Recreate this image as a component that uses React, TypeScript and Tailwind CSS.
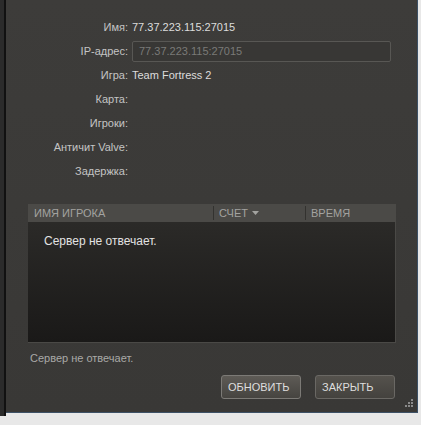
import React from 'react';

const rows = [
  { label: 'Имя:', value: '77.37.223.115:27015' },
  { label: 'IP-адрес:', input: '77.37.223.115:27015' },
  { label: 'Игра:', value: 'Team Fortress 2' },
  { label: 'Карта:' },
  { label: 'Игроки:' },
  { label: 'Античит Valve:' },
  { label: 'Задержка:' },
];

function Grip() {
  return (
    <svg width="10" height="10" viewBox="0 0 10 10" className="absolute right-[3px] bottom-[3px]">
      <rect x="7" y="0" width="2" height="2" fill="#8a8a8a" />
      <rect x="4" y="3" width="2" height="2" fill="#8a8a8a" />
      <rect x="7" y="3" width="2" height="2" fill="#8a8a8a" />
      <rect x="1" y="6" width="2" height="2" fill="#8a8a8a" />
      <rect x="4" y="6" width="2" height="2" fill="#8a8a8a" />
      <rect x="7" y="6" width="2" height="2" fill="#8a8a8a" />
    </svg>
  );
}

function App() {
  return (
    <div className="w-[421px] h-[425px] bg-[#e8e8e8] overflow-hidden antialiased" style={{ fontFamily: '"Liberation Sans", Arial, sans-serif' }}>
      <div className="flex h-[416px]">
        <div className="w-[4px] bg-[#2b2b2b]" />
        <div className="w-[2px] bg-[#111]" />
        <div className="relative flex flex-col w-[412px] h-[413px] bg-gradient-to-b from-[#3d3c3a] to-[#393836] border-r border-b border-[#3d5166]">
          <div className="pt-[15px] flex flex-col">
            {rows.map((r) => (
              <div key={r.label} className="flex items-center h-[24px]">
                <div className="w-[122px] text-right text-[11px] text-[#c4c4c4]">{r.label}</div>
                <div className="ml-[4px] text-[11px] text-[#dcdcdc]">
                  {r.input ? (
                    <div className="w-[259px] h-[21px] border border-[#585754] rounded-[2px] bg-[#383735] flex items-center px-[6px] text-[#7a7a78]">
                      {r.input}
                    </div>
                  ) : (
                    r.value
                  )}
                </div>
              </div>
            ))}
          </div>

          <div className="ml-[22px] mt-[21px] w-[368px] flex flex-col">
            <div className="flex h-[18px] bg-[#4b4a47] text-[11px] text-[#a3a3a0] items-center">
              <div className="w-[185px] pl-[6px]">ИМЯ ИГРОКА</div>
              <div className="w-px h-[14px] bg-[#33322f]" />
              <div className="w-[91px] pl-[5px] flex items-center gap-[4px]">
                СЧЕТ
                <svg width="7" height="4" viewBox="0 0 7 4"><path d="M0 0h7L3.5 4z" fill="#a3a3a0" /></svg>
              </div>
              <div className="w-px h-[14px] bg-[#33322f]" />
              <div className="pl-[5px]">ВРЕМЯ</div>
            </div>
            <div className="h-[121px] bg-gradient-to-b from-[#2b2a28] to-[#1a1918] border-r border-b border-[#4a4946] pl-[16px] pt-[10px] text-[12px] text-[#e2e2e2]">
              Сервер не отвечает.
            </div>
          </div>

          <div className="ml-[24px] mt-[8px] h-[14px] text-[11px] leading-[14px] text-[#a9a9a7]">Сервер не отвечает.</div>

          <div className="flex justify-end gap-[14px] pr-[22px] mt-[10px]">
            <button className="w-[80px] h-[24px] rounded-[3px] border border-[#7c7a76] bg-gradient-to-b from-[#5e5b56] to-[#464440] text-[11px] text-[#dedede] text-left pl-[6px]">
              ОБНОВИТЬ
            </button>
            <button className="w-[80px] h-[24px] rounded-[3px] border border-[#6a6864] bg-gradient-to-b from-[#55524d] to-[#44423e] text-[11px] text-[#dedede] text-left pl-[6px]">
              ЗАКРЫТЬ
            </button>
          </div>
          <Grip />
        </div>
        <div className="w-[3px] bg-[#e8e8e8]" />
      </div>
    </div>
  );
}

export default App;
